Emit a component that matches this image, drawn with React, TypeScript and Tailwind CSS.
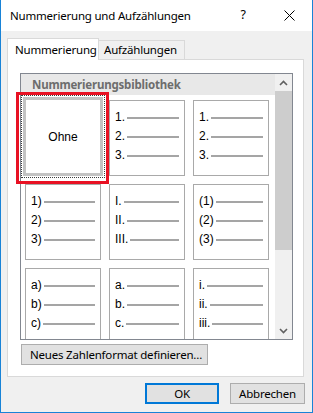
import React from "react";

const cells: (string[] | null)[] = [
  null,
  ["1.", "2.", "3."],
  ["1.", "2.", "3."],
  ["1)", "2)", "3)"],
  ["I.", "II.", "III."],
  ["(1)", "(2)", "(3)"],
  ["a)", "b)", "c)"],
  ["a.", "b.", "c."],
  ["i.", "ii.", "iii."],
];

function Cell({ items }: { items: string[] }) {
  return (
    <div className="w-[76px] h-[76px] border border-[#a9a9a9] bg-white pt-[7px] pl-[5px] pr-[5px] flex flex-col font-['Liberation_Sans',Arial,sans-serif] text-[12px] tracking-normal text-black">
      {items.map((t) => (
        <div key={t} className="h-[19px] leading-[19px] flex items-center">
          <span>{t}</span>
          <div className="flex-1 ml-[2px] h-[2px] bg-[#a5a5a5]" />
        </div>
      ))}
    </div>
  );
}

function SelectedCell() {
  return (
    <div className="relative w-[76px] h-[76px]">
      <div className="absolute -left-[4px] -right-[4px] -top-[5px] -bottom-[2px] border border-dotted border-[#3c3c3c]" />
      <div className="absolute -left-[2px] -right-[2px] -top-[3px] bottom-0 border-[3px] border-[#c3c3c3] bg-white flex items-center justify-center font-['Liberation_Sans',Arial,sans-serif] text-[12px] tracking-normal text-black">
        Ohne
      </div>
    </div>
  );
}

export default function App() {
  return (
    <div className="w-[313px] h-[413px] bg-[#f0f0f0] border-l border-r border-b border-[#1883d7] flex flex-col font-['Noto_Sans',sans-serif] text-[11.5px] tracking-[-0.2px] text-black overflow-hidden whitespace-nowrap">
      {/* Title bar */}
      <div className="h-[31px] bg-white flex items-center shrink-0">
        <div className="flex-1 pl-[9px] leading-none">Nummerierung und Aufzählungen</div>
        <div className="w-[46px] h-full flex items-center justify-center text-[12.5px]">?</div>
        <div className="w-[46px] h-full flex items-center justify-center">
          <svg width="11" height="11" viewBox="0 0 11 11">
            <path d="M0.5 0.5 L10.5 10.5 M10.5 0.5 L0.5 10.5" stroke="#000" strokeWidth="1" fill="none" />
          </svg>
        </div>
      </div>

      {/* Tabs */}
      <div className="ml-[6px] mr-[8px] mt-[7px] flex flex-col">
        <div className="h-[21px] flex items-end relative z-10">
          <div className="h-[22px] -mb-px w-[92px] bg-white border-l border-t border-r border-[#d9d9d9] pl-[7px] flex items-center">
            Nummerierung
          </div>
          <div className="h-[19px] w-[86px] border-t border-r border-[#d9d9d9] pl-[5px] flex items-center">
            Aufzählungen
          </div>
        </div>
        <div className="h-[318px] border border-[#d9d9d9] bg-white pl-[12px] pt-[13px] flex flex-col">
          {/* List box */}
          <div className="relative w-[273px] h-[267px] border border-[#828790] flex">
            <div className="flex-1 overflow-hidden flex flex-col">
              <div className="h-[21px] shrink-0 bg-[#e8e8e8] pl-[11px] flex items-center font-bold text-[#6d6d6d]">
                Nummerierungsbibliothek
              </div>
              <div className="pl-[4px] pt-[5px] grid grid-cols-[76px_76px_76px] gap-[8px]">
                {cells.map((c, i) =>
                  c === null ? <SelectedCell key={i} /> : <Cell key={i} items={c} />
                )}
              </div>
            </div>
            <div className="w-[17px] bg-[#f0f0f0] flex flex-col shrink-0">
              <div className="h-[17px] flex items-center justify-center">
                <svg width="9" height="6" viewBox="0 0 9 6">
                  <path d="M1 5 L4.5 1.5 L8 5" stroke="#606060" strokeWidth="1.6" fill="none" />
                </svg>
              </div>
              <div className="h-[159px] bg-[#cdcdcd]" />
              <div className="flex-1" />
              <div className="h-[17px] flex items-center justify-center">
                <svg width="9" height="6" viewBox="0 0 9 6">
                  <path d="M1 1 L4.5 4.5 L8 1" stroke="#606060" strokeWidth="1.6" fill="none" />
                </svg>
              </div>
            </div>
            {/* Red highlight annotation */}
            <div className="absolute left-[-5px] top-[18px] w-[93px] h-[92px] border-[3px] border-[#e81123] pointer-events-none" />
          </div>
          <button className="ml-[1px] mt-[4px] w-[187px] h-[21px] border border-[#adadad] bg-[#e1e1e1] text-left pl-[8px] flex items-center">
            Neues Zahlenformat definieren...
          </button>
        </div>
      </div>

      {/* Bottom buttons */}
      <div className="mt-[6px] mr-[7px] flex justify-end gap-[11px]">
        <button className="w-[74px] h-[21px] border-2 border-[#0078d7] bg-[#e1e1e1] flex items-center justify-center">
          OK
        </button>
        <button className="w-[75px] h-[21px] border border-[#adadad] bg-[#e1e1e1] flex items-center justify-center">
          Abbrechen
        </button>
      </div>
    </div>
  );
}
